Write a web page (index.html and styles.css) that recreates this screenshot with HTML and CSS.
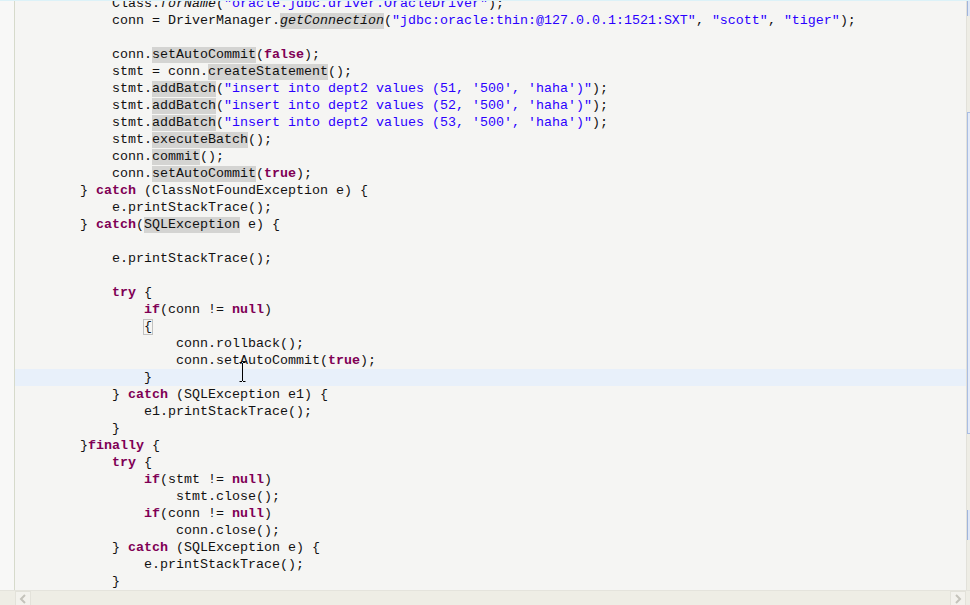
FILE: index.html
```html
<!DOCTYPE html>
<html lang="en">
<head>
  <meta charset="UTF-8" />
  <title>JDBC batch - Editor</title>
  <link rel="stylesheet" href="styles.css">
</head>
<body>
  <div class="editor">
    <div class="main">
      <div class="ruler"></div>
      <div class="code">
        <div class="lines">
          <div class="ln">            Class.<i>forName</i>(<s>"oracle.jdbc.driver.OracleDriver"</s>);</div>
          <div class="ln">            conn = DriverManager.<i class="hl">getConnection</i>(<s>"jdbc:oracle:thin:@127.0.0.1:1521:SXT"</s>, <s>"scott"</s>, <s>"tiger"</s>);</div>
          <div class="ln"></div>
          <div class="ln">            conn.<span class="hl">setAutoCommit</span>(<b>false</b>);</div>
          <div class="ln">            stmt = conn.<span class="hl">createStatement</span>();</div>
          <div class="ln">            stmt.<span class="hl">addBatch</span>(<s>"insert into dept2 values (51, '500', 'haha')"</s>);</div>
          <div class="ln">            stmt.<span class="hl">addBatch</span>(<s>"insert into dept2 values (52, '500', 'haha')"</s>);</div>
          <div class="ln">            stmt.<span class="hl">addBatch</span>(<s>"insert into dept2 values (53, '500', 'haha')"</s>);</div>
          <div class="ln">            stmt.<span class="hl">executeBatch</span>();</div>
          <div class="ln">            conn.<span class="hl">commit</span>();</div>
          <div class="ln">            conn.<span class="hl">setAutoCommit</span>(<b>true</b>);</div>
          <div class="ln">        } <b>catch</b> (ClassNotFoundException e) {</div>
          <div class="ln">            e.printStackTrace();</div>
          <div class="ln">        } <b>catch</b>(<span class="hl">SQLException</span> e) {</div>
          <div class="ln"></div>
          <div class="ln">            e.printStackTrace();</div>
          <div class="ln"></div>
          <div class="ln">            <b>try</b> {</div>
          <div class="ln">                <b>if</b>(conn != <b>null</b>)</div>
          <div class="ln">                <span class="match">{</span></div>
          <div class="ln">                    conn.rollback();</div>
          <div class="ln">                    conn.setAutoCommit(<b>true</b>);</div>
          <div class="ln current">                }</div>
          <div class="ln">            } <b>catch</b> (SQLException e1) {</div>
          <div class="ln">                e1.printStackTrace();</div>
          <div class="ln">            }</div>
          <div class="ln">        }<b>finally</b> {</div>
          <div class="ln">            <b>try</b> {</div>
          <div class="ln">                <b>if</b>(stmt != <b>null</b>)</div>
          <div class="ln">                    stmt.close();</div>
          <div class="ln">                <b>if</b>(conn != <b>null</b>)</div>
          <div class="ln">                    conn.close();</div>
          <div class="ln">            } <b>catch</b> (SQLException e) {</div>
          <div class="ln">                e.printStackTrace();</div>
          <div class="ln">            }</div>
          <div class="ln"></div>
        </div>
        <svg class="ibeam" width="7" height="20" viewBox="0 0 7 20">
          <path d="M0.5 0.5h2.5M4 0.5h2.5M3.5 1v18M0.5 19.5h2.5M4 19.5h2.5" stroke="#000" stroke-width="1" fill="none"/>
        </svg>
      </div>
      <div class="vscroll">
        <div class="vbtn"></div>
        <div class="vgap"></div>
        <div class="vthumb"></div>
        <div class="vgap2"></div>
        <div class="vbtn low"></div>
      </div>
    </div>
    <div class="hscroll">
      <div class="corner"></div>
      <div class="hbtn">
        <svg width="8" height="10" viewBox="0 0 8 10"><path d="M6 1L2 5l4 4" stroke="#c4c3bb" stroke-width="2" fill="none"/></svg>
      </div>
      <div class="htrack"></div>
      <div class="hbtn">
        <svg width="8" height="10" viewBox="0 0 8 10"><path d="M2 1l4 4-4 4" stroke="#c4c3bb" stroke-width="2" fill="none"/></svg>
      </div>
      <div class="vcorner"></div>
    </div>
  </div>
</body>
</html>
```

FILE: styles.css
```css
body {
  margin: 0;
  background-color: #f5f5f3;
  overflow: hidden;
}
.editor {
  width: 970px;
  height: 605px;
  display: flex;
  flex-direction: column;
  border-top: 1px solid #dcf2f8;
  box-sizing: border-box;
}
.main {
  height: 590px;
  display: flex;
  overflow: hidden;
}
.ruler {
  width: 14px;
  background-color: #f8f8f7;
  border-right: 1px solid #d6dacb;
}
.code {
  flex: 1;
  position: relative;
  overflow: hidden;
  background-color: #f5f5f3;
}
.lines {
  margin-top: -6px;
  font-family: "Liberation Mono", "Courier New", monospace;
  font-size: 13.333px;
  color: #111;
}
.ln {
  height: 17px;
  line-height: 17px;
  white-space: pre;
  padding-left: 1px;
}
.ln.current { background-color: #e8f0fa; }
.ln b {
  color: #7f0055;
  font-weight: bold;
}
.ln s {
  color: #2a00ff;
  text-decoration: none;
}
.ln i { font-style: italic; }
.hl {
  display: inline-block;
  height: 16px;
  line-height: 16px;
  background-color: #d4d4d2;
  vertical-align: top;
  margin-top: 1px;
}
.match {
  display: inline-block;
  height: 14px;
  line-height: 14px;
  border: 1px solid #c2c2c0;
  margin: 1px -1px 0 -1px;
  vertical-align: top;
}
.ibeam {
  position: absolute;
  left: 224px;
  top: 361px;
}
.vscroll {
  width: 3px;
  background-color: #eeede5;
  border-left: 1px solid #e2e1da;
  display: flex;
  flex-direction: column;
}
.vbtn {
  height: 15px;
  border-left: 1px solid #9fb4dc;
  background-color: #dfe7f6;
}
.vgap { height: 96px; }
.vthumb {
  height: 320px;
  border-left: 1px solid #a9bde3;
  border-top: 1px solid #a9bde3;
  border-bottom: 1px solid #a9bde3;
  background-color: #e4ebf8;
}
.vgap2 { flex: 1; }
.vbtn.low { height: 30px; margin-bottom: 50px; }
.hscroll {
  height: 14px;
  display: flex;
  background-color: #eeede5;
  border-top: 1px solid #e4e3dc;
}
.corner {
  width: 15px;
  background-color: #eeede5;
}
.hbtn {
  width: 14px;
  background-color: #f3f2ed;
  border: 1px solid #e3e2da;
  border-bottom: none;
  display: flex;
  align-items: center;
  justify-content: center;
}
.htrack { flex: 1; }
.vcorner {
  width: 4px;
  background-color: #eeede5;
}
```
